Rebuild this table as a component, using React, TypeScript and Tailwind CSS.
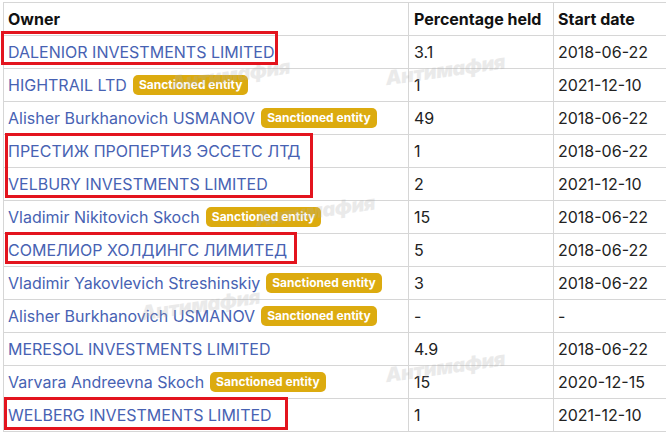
import React from 'react';

type Row = {
  owner: string;
  sanctioned?: boolean;
  pct: string;
  date: string;
};

const rows: Row[] = [
  { owner: 'DALENIOR INVESTMENTS LIMITED', pct: '3.1', date: '2018-06-22' },
  { owner: 'HIGHTRAIL LTD', sanctioned: true, pct: '1', date: '2021-12-10' },
  { owner: 'Alisher Burkhanovich USMANOV', sanctioned: true, pct: '49', date: '2018-06-22' },
  { owner: 'ПРЕСТИЖ ПРОПЕРТИЗ ЭССЕТС ЛТД', pct: '1', date: '2018-06-22' },
  { owner: 'VELBURY INVESTMENTS LIMITED', pct: '2', date: '2021-12-10' },
  { owner: 'Vladimir Nikitovich Skoch', sanctioned: true, pct: '15', date: '2018-06-22' },
  { owner: 'СОМЕЛИОР ХОЛДИНГС ЛИМИТЕД', pct: '5', date: '2018-06-22' },
  { owner: 'Vladimir Yakovlevich Streshinskiy', sanctioned: true, pct: '3', date: '2018-06-22' },
  { owner: 'Alisher Burkhanovich USMANOV', sanctioned: true, pct: '-', date: '-' },
  { owner: 'MERESOL INVESTMENTS LIMITED', pct: '4.9', date: '2018-06-22' },
  { owner: 'Varvara Andreevna Skoch', sanctioned: true, pct: '15', date: '2020-12-15' },
  { owner: 'WELBERG INVESTMENTS LIMITED', pct: '1', date: '2021-12-10' },
];

// highlight boxes drawn over the table
const marks = [
  { l: 1, t: 31, w: 277, h: 34 },
  { l: 5, t: 133, w: 308, h: 65 },
  { l: 5, t: 232, w: 292, h: 32 },
  { l: 4, t: 397, w: 284, h: 33 },
];

// faint watermark stamps
const stamps = [
  { l: 170, t: 60 },
  { l: 385, t: 55 },
  { l: 255, t: 196 },
  { l: 140, t: 290 },
  { l: 385, t: 352 },
];

function Badge() {
  return (
    <span className="ml-[6px] inline-flex h-[20px] items-center rounded-[5px] bg-[#dcab0f] px-[6px] text-[12px] font-bold leading-none text-white">
      Sanctioned entity
    </span>
  );
}

export default function App() {
  return (
    <div
      className="relative h-[437px] w-[666px] overflow-hidden bg-white"
      style={{ fontFamily: 'Inter, "Noto Sans", sans-serif' }}
    >
      <div className="mt-[2px] ml-[3px] border-t border-l border-[#d6d6d6]">
        <div className="grid h-[33px] grid-cols-[404px_145px_1fr] border-b border-[#d6d6d6] text-[16px] font-bold text-[#111]">
          <div className="flex items-center px-[4px]">Owner</div>
          <div className="flex items-center border-l border-[#d6d6d6] px-[5px]">Percentage held</div>
          <div className="flex items-center border-l border-[#d6d6d6] px-[4px]">Start date</div>
        </div>
        {rows.map((r, i) => (
          <div
            key={i}
            className="grid h-[33px] grid-cols-[404px_145px_1fr] border-b border-[#d6d6d6] text-[16px] text-[#222]"
          >
            <div className="flex items-center whitespace-nowrap px-[4px]">
              <span className="text-[#4762b3]">{r.owner}</span>
              {r.sanctioned && <Badge />}
            </div>
            <div className="flex items-center border-l border-[#d6d6d6] px-[5px]">{r.pct}</div>
            <div className="flex items-center border-l border-[#d6d6d6] px-[4px]">{r.date}</div>
          </div>
        ))}
      </div>

      {stamps.map((s, i) => (
        <div
          key={i}
          className="pointer-events-none absolute -rotate-[8deg] text-[20px] font-black italic tracking-tight text-[#b0b0b0] opacity-25"
          style={{ left: s.l, top: s.t }}
        >
          Антимафия
        </div>
      ))}

      {marks.map((m, i) => (
        <div
          key={i}
          className="pointer-events-none absolute border-[3px] border-[#e3141e]"
          style={{ left: m.l, top: m.t, width: m.w, height: m.h }}
        />
      ))}
    </div>
  );
}
